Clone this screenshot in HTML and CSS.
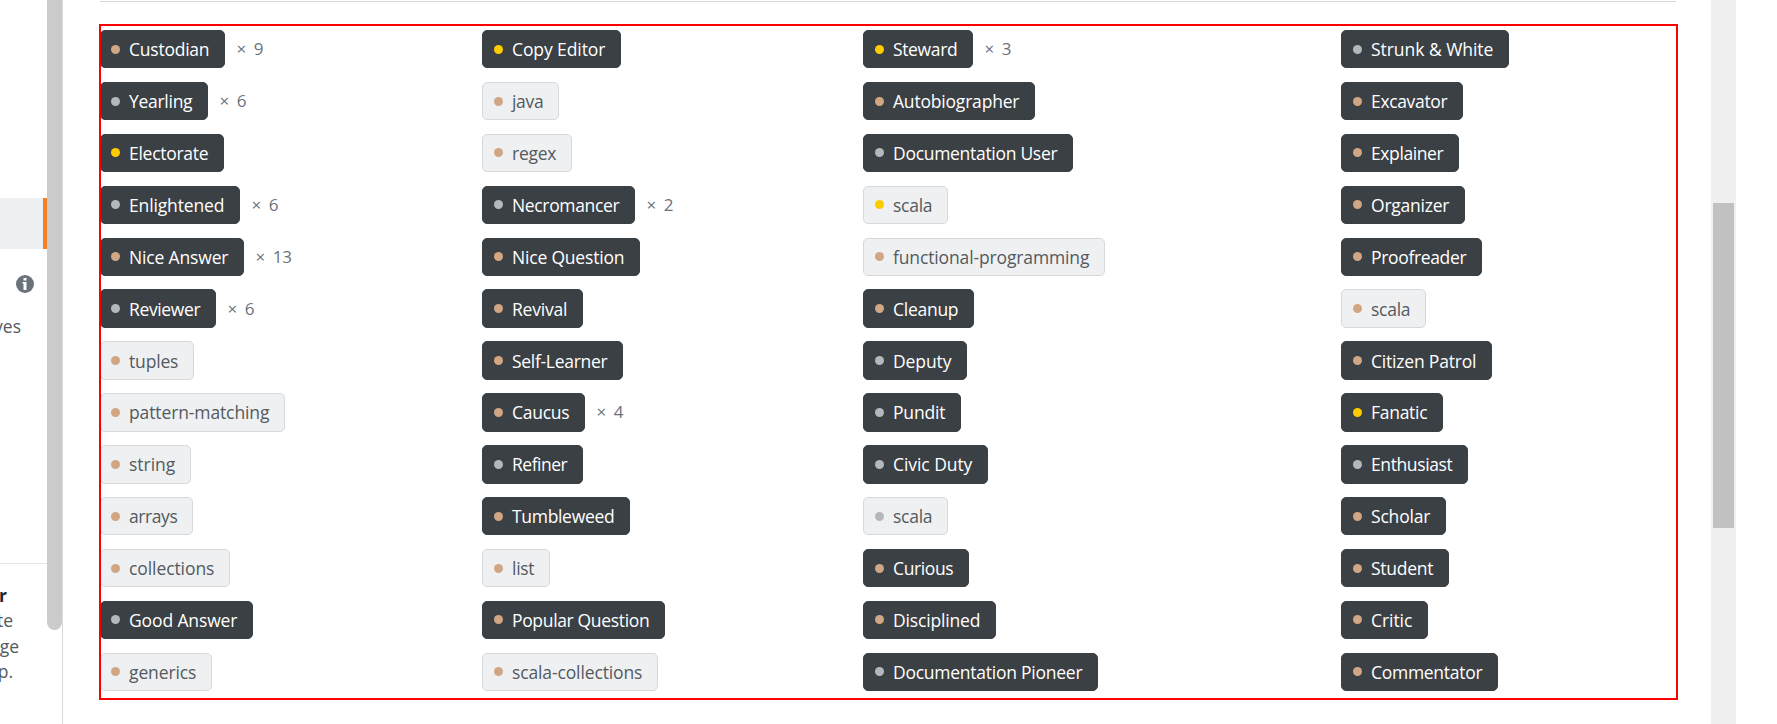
FILE: index.html
```html
<!DOCTYPE html>
<html lang="en">
<head>
<meta charset="utf-8">
<title>Badges</title>
<link rel="stylesheet" href="styles.css">
</head>
<body>
<div class="page">
  <aside class="sidebar">
    <div class="side-body">
      <div class="side-active"></div>
      <div class="side-info">
        <svg width="18" height="18" viewBox="0 0 18 18"><circle cx="9" cy="9" r="9" fill="#6a737c"/><path d="M7.500 3h3v2.500h-3zM6.500 7h4v8h-3V8.500h-1z" fill="#fff"/></svg>
      </div>
      <div class="side-link">ves</div>
      <div class="side-promo">
        <b>r</b><span class="l1">te</span><span class="l2">ge</span><span class="l3">p.</span>
      </div>
    </div>
    <div class="side-scroll"></div>
  </aside>
  <main class="content">
    <hr class="rule">
    <section class="badges" id="badges"></section>
  </main>
  <div class="scrollbar"><div class="thumb"></div></div>
</div>
<script src="badges.js"></script>
</body>
</html>
```
FILE: styles.css
```css
* { box-sizing: border-box; }
body {
  margin: 0;
  background: #fff;
  font-family: "Open Sans", "Noto Sans", sans-serif;
  font-size: 17.5px;
  overflow: hidden;
}
.page { display: flex; width: 1777px; height: 724px; }
.sidebar { display: flex; flex: none; width: 63px; border-right: 1px solid #d6d9dc; overflow: hidden; }
.side-body { width: 47px; padding-top: 198px; color: #535a60; }
.side-active { height: 51px; background: #eff0f2; border-right: 4px solid #f48024; }
.side-info { display: flex; height: 18px; margin-top: 26px; padding-left: 15.5px; }
.side-link { display: flex; justify-content: flex-end; width: 21px; height: 26px; line-height: 26px; margin-top: 20px; font-size: 17.5px; }
.side-promo {
  display: flex;
  flex-direction: column;
  align-items: flex-end;
  margin-top: 224px;
  padding: 18.5px 28px 0 0;
  border-top: 1px solid #e4e6e8;
  line-height: 25.6px;
}
.side-promo b { color: #242729; margin-right: 12px; }
.side-promo .l1 { margin-right: 6px; }
.side-promo .l3 { margin-right: 6px; }
.side-scroll { width: 15px; height: 630px; background: #cbcbcb; border-radius: 0 0 8px 8px; }
.content { flex: none; width: 1648px; padding: 1px 0 0 36px; }
.rule { width: 1576px; height: 1px; margin: 0 0 0 1px; border: 0; background: #d6d9dc; }
.scrollbar { flex: none; width: 25px; height: 724px; padding: 203px 2px 0; background: #f0f0f0; }
.thumb { height: 325px; background: #c1c1c1; }
.badges {
  position: relative;
  display: grid;
  grid-template-columns: 382px 381px 478px 336px;
  width: 1579px;
  height: 676px;
  margin-top: 22px;
  padding: 6px 1px;
}
.badges::after {
  content: "";
  position: absolute;
  inset: 0;
  border: 2px solid #f00;
}
.column { display: flex; flex-direction: column; gap: 13.5px; }
.row { display: flex; align-items: center; height: 38.4px; flex: none; }
.badge {
  display: flex;
  align-items: center;
  height: 38.4px;
  padding-left: 11px;
  border: 1px solid #3b4045;
  border-radius: 5px;
  background: #3b4045;
  color: #fff;
  white-space: nowrap;
}
.column:first-child .badge { padding-left: 10px; }
.badge.tag { background: #eff0f2; border-color: #d6d9dc; color: #535a60; }
.dot { width: 9px; height: 9px; margin-right: 9px; border-radius: 50%; flex: none; }
.bronze { background: #d1a684; }
.silver { background: #b4b8bc; }
.gold { background: #ffcc01; }
.count { margin-left: 11.5px; color: #6a737c; font-size: 17px; word-spacing: 3px; }
.label, .count { line-height: 24px; }
```
FILE: badges.js
```javascript
// name, medal (b/s/g, upper case for tag badges), badge width, optional count
const columns = [
  [["Custodian","b",125,9],["Yearling","s",108,6],["Electorate","g",124],["Enlightened","s",140,6],["Nice Answer","b",144,13],["Reviewer","s",116,6],["tuples","B",94],["pattern-matching","B",185],["string","B",91],["arrays","B",93],["collections","B",130],["Good Answer","s",153],["generics","B",112]],
  [["Copy Editor","g",139],["java","B",77],["regex","B",90],["Necromancer","s",153,2],["Nice Question","b",158],["Revival","b",101],["Self-Learner","b",141],["Caucus","b",103,4],["Refiner","s",101],["Tumbleweed","b",148],["list","B",68],["Popular Question","b",183],["scala-collections","B",176]],
  [["Steward","g",110,3],["Autobiographer","b",172],["Documentation User","s",210],["scala","G",85],["functional-programming","B",242],["Cleanup","b",111],["Deputy","s",104],["Pundit","s",98],["Civic Duty","s",125],["scala","S",85],["Curious","b",106],["Disciplined","b",133],["Documentation Pioneer","s",235]],
  [["Strunk & White","s",168],["Excavator","b",122],["Explainer","b",118],["Organizer","b",124],["Proofreader","b",141],["scala","B",85],["Citizen Patrol","b",151],["Fanatic","g",102],["Enthusiast","s",127],["Scholar","b",105],["Student","b",108],["Critic","b",87],["Commentator","b",157]]
];
const medals = { b: "bronze", s: "silver", g: "gold" };
const root = document.getElementById("badges");

function el(tag, className, parent, text) {
  const node = document.createElement(tag);
  node.className = className;
  if (text) node.textContent = text;
  parent.appendChild(node);
  return node;
}

columns.forEach((items, col) => {
  const column = el("div", "column", root);
  items.forEach(([name, medal, width, count]) => {
    const row = el("div", "row", column);
    const isTag = medal !== medal.toLowerCase();
    const badge = el("a", isTag ? "badge tag" : "badge", row);
    badge.style.width = width + "px";
    el("span", "dot " + medals[medal.toLowerCase()], badge);
    const label = el("span", "label", badge, name);
    // spread the letters so the label ends 16px before the badge edge
    const target = width - (col === 0 ? 29 : 30) - 15.7;
    const natural = label.getBoundingClientRect().width;
    label.style.letterSpacing = (target - natural) / name.length + "px";
    if (count) el("span", "count", row, "× " + count);
  });
});
```
